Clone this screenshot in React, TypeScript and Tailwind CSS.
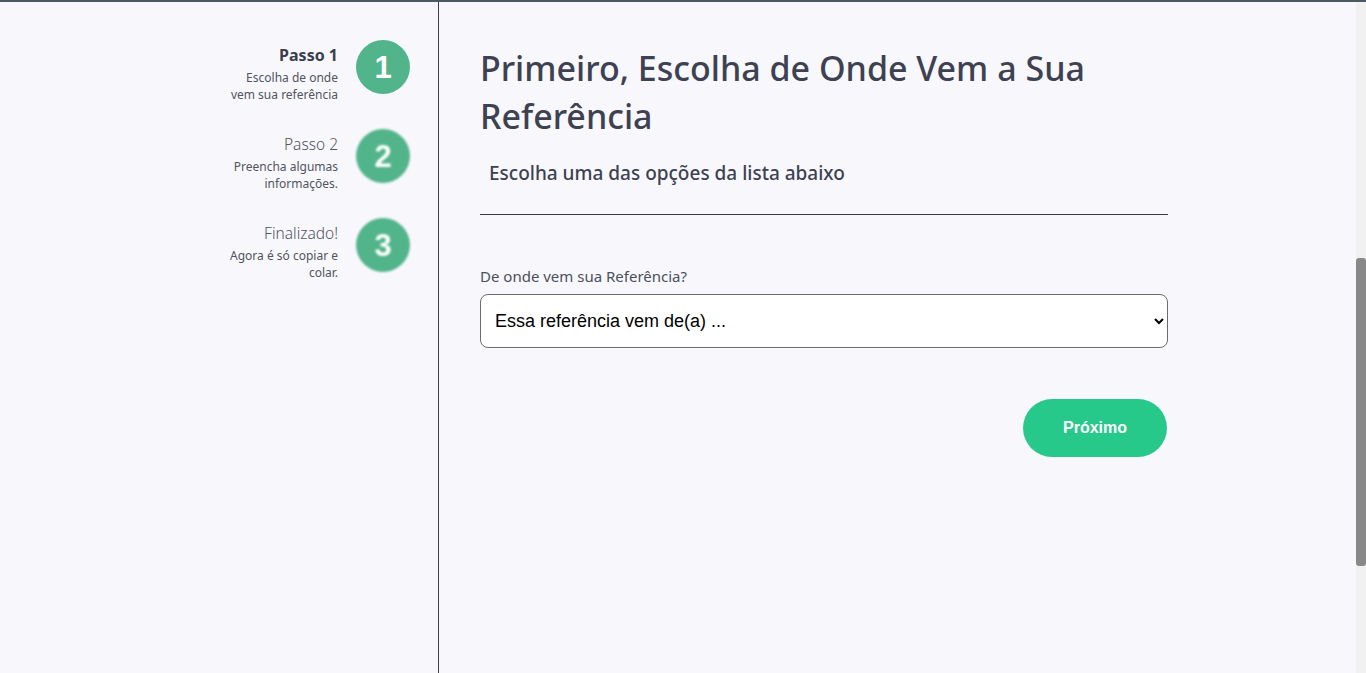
import React from "react";

type Step = {
  title: string;
  desc: string[];
  num: number;
  active?: boolean;
};

const steps: Step[] = [
  { title: "Passo 1", desc: ["Escolha de onde", "vem sua referência"], num: 1, active: true },
  { title: "Passo 2", desc: ["Preencha algumas", "informações."], num: 2 },
  { title: "Finalizado!", desc: ["Agora é só copiar e", "colar."], num: 3 },
];

const sans = "font-['Noto_Sans','Open_Sans',sans-serif]";

const StepItem = ({ step }: { step: Step }) => (
  <div className="flex items-start justify-end gap-[18px] h-[89px]">
    <div className="flex flex-col items-end text-right pt-[4px]">
      <p
        className={
          step.active
            ? "text-[16px] leading-[22px] font-bold text-[#3a3e4d]"
            : "text-[15.5px] leading-[22px] font-light text-[#505460]"
        }
      >
        {step.title}
      </p>
      <div className="mt-[3px] text-[12px] leading-[17px] text-[#505460]">
        {step.desc.map((d) => (
          <p key={d}>{d}</p>
        ))}
      </div>
    </div>
    <div
      className={
        "w-[54px] h-[54px] rounded-full bg-[#52b48a] flex items-center justify-center shrink-0 " +
        (step.active ? "" : "blur-[1px]")
      }
    >
      <span className="font-['Liberation_Sans',Arial,sans-serif] font-bold text-[31px] text-white leading-none">
        {step.num}
      </span>
    </div>
  </div>
);

const App = () => {
  return (
    <div className={`w-full h-[673px] flex bg-[#f8f8fc] border-t-2 border-[#4b5a62] overflow-hidden ${sans}`}>
      <aside className="w-[439px] shrink-0 border-r border-[#3f3f46] pt-[38px] pr-[28px]">
        {steps.map((s) => (
          <StepItem key={s.num} step={s} />
        ))}
      </aside>
      <main className="flex-1 pl-[41px] pt-[42px]">
        <div className="w-[688px]">
          <h1 className="text-[34px] leading-[48px] font-medium text-[#3d4152]">
            Primeiro, Escolha de Onde Vem a Sua Referência
          </h1>
          <p className="mt-[20px] pl-[9px] text-[19px] leading-[26px] font-medium text-[#3d4152]">
            Escolha uma das opções da lista abaixo
          </p>
          <hr className="mt-[28px] border-t border-[#3d3d3d]" />
          <label className="block mt-[51px] text-[15px] leading-[21px] text-[#4b4f5c]">
            De onde vem sua Referência?
          </label>
          <select className="mt-[7px] w-full h-[54px] rounded-[8px] border border-[#6b6b6b] bg-white pl-[10px] pr-[8px] text-[18px] text-black font-['Liberation_Sans',Arial,sans-serif]">
            <option>Essa referência vem de(a) ...</option>
          </select>
          <div className="flex justify-end mt-[51px] pr-[1px]">
            <button className="w-[144px] h-[58px] rounded-full bg-[#26c98a] text-white font-bold text-[16px] font-['Liberation_Sans',Arial,sans-serif]">
              Próximo
            </button>
          </div>
        </div>
      </main>
      <div className="w-[10px] shrink-0 bg-[#f1f1f1] pt-[256px]">
        <div className="h-[308px] bg-[#888888] rounded-[3px]" />
      </div>
    </div>
  );
};

export default App;
